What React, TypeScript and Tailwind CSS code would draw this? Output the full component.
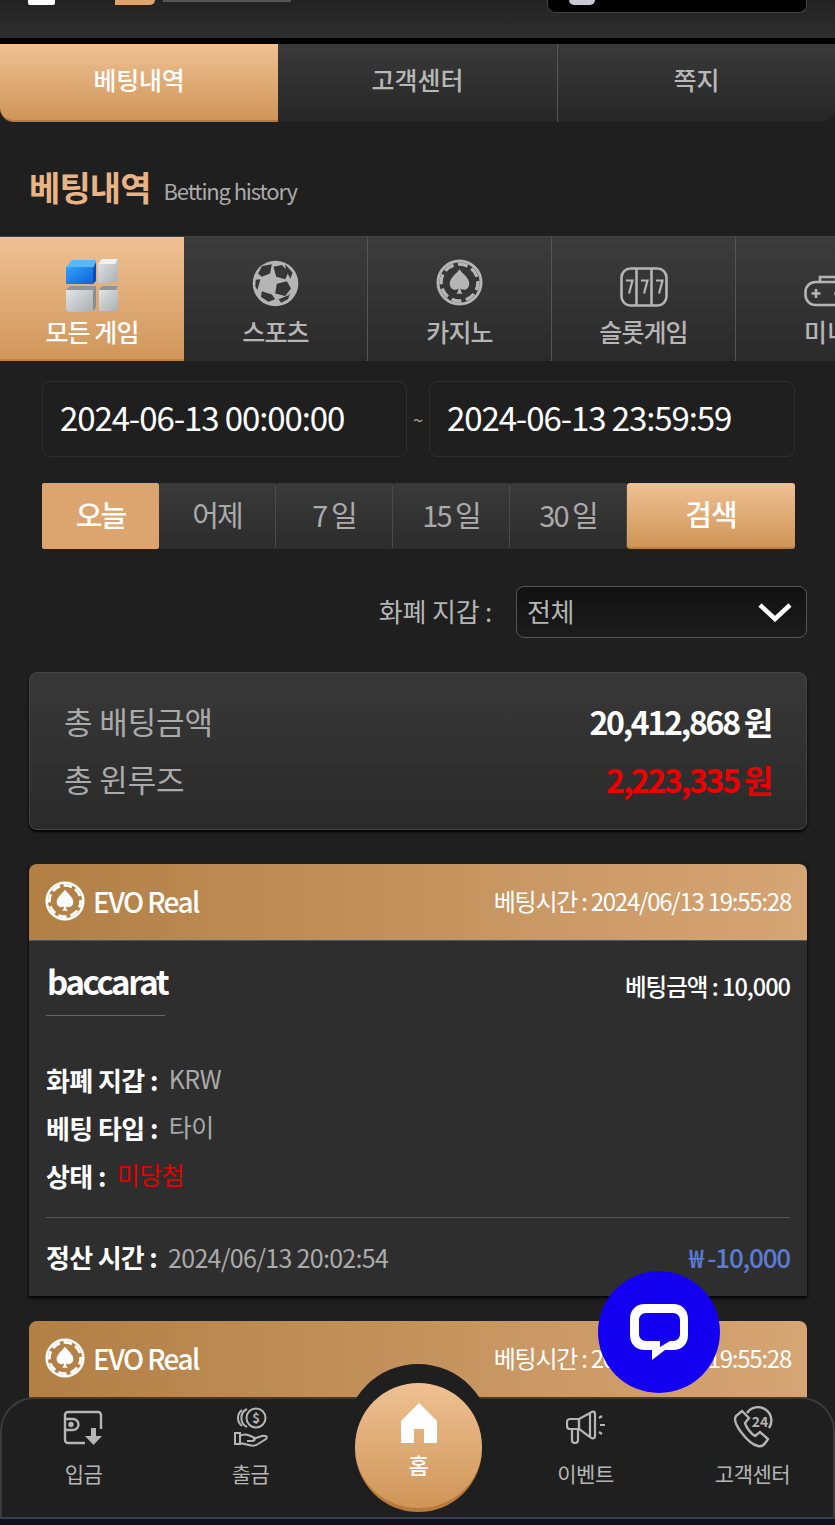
import React from "react";

const spade = "M12 5.2c1.9 2.7 5 4.4 5 7.4 0 1.9-1.4 3.1-2.9 3.1-.7 0-1.2-.2-1.6-.6.1 1.1.5 2 1.1 2.7h-3.2c.6-.7 1-1.6 1.1-2.7-.4.4-.9.6-1.6.6-1.5 0-2.9-1.2-2.9-3.1 0-3 3.1-4.7 5-7.4z";

function Chip({ className }: { className: string }) {
  return (
    <svg viewBox="0 0 24 24" className={className} fill="none" stroke="currentColor">
      <circle cx="12" cy="12" r="11" strokeWidth="1.5" />
      <circle cx="12" cy="12" r="9.4" strokeWidth="1.7" strokeDasharray="5.1 2.28" strokeDashoffset="1.1" />
      <path d={spade} fill="currentColor" stroke="none" />
    </svg>
  );
}

function Ball() {
  return (
    <svg viewBox="36 15 140 140" className="w-[47px] h-[47px]">
      <circle cx="106" cy="85" r="68" fill="#b5b5b5" />
      <g fill="#363636">
        <path d="M100 35l25-5 20 20-10 22-27-7z" />
        <path d="M110 86l30-8 12 22-17 22-30-7z" />
        <path d="M65 108l30 10 10 14-20 7-22-14z" />
        <path d="M66 33l29-5-5 27-25 10-11-10z" />
        <path d="M47 74l14-2-9 33-6-12z" />
        <path d="M135 28l22 25-7 18-13-28z" />
        <path d="M115 132l30-12 6-8-8 20-20 10z" />
      </g>
    </svg>
  );
}

function Cubes() {
  return (
    <svg viewBox="0 0 54 56" className="w-[54px] h-[56px]">
      <defs>
        <linearGradient id="cb" x1="0" y1="0" x2="1" y2="1"><stop offset="0" stopColor="#35a2f5" /><stop offset="1" stopColor="#0c62dc" /></linearGradient>
        <linearGradient id="cg" x1="0" y1="0" x2="1" y2="1"><stop offset="0" stopColor="#e3e5e6" /><stop offset="1" stopColor="#a9aeb2" /></linearGradient>
      </defs>
      <path d="M1 10 7 3h24v2l-3 6z" fill="#5bb8f7" />
      <path d="M1 10h27v17H1z" fill="url(#cb)" />
      <path d="M28 11l3-6v19l-3 3z" fill="#0b4fb5" />
      <path d="M33 7l4-5h16v23l-20 1z" fill="url(#cg)" />
      <path d="M33 7l4-5h16l-3 5z" fill="#f0f1f2" />
      <path d="M1 33l4-4h26l-3 4z" fill="#8f9599" />
      <path d="M1 33h27v20l-2 2H3l-2-2z" fill="url(#cg)" />
      <path d="M28 33l3-4v21l-3 4z" fill="#888e92" />
      <path d="M34 33l3-4h16l-2 4z" fill="#8f9599" />
      <path d="M34 33h19v21H34z" fill="url(#cg)" />
    </svg>
  );
}

function Slot() {
  return (
    <svg viewBox="0 0 48 40" className="w-[48px] h-[40px]" fill="none" stroke="#b5b5b5" strokeWidth="2.6">
      <rect x="1.5" y="1.5" width="45" height="37" rx="9" />
      <path d="M16.5 2v36M31.5 2v36" />
      <path d="M6 13.5h6.500l-3.500 13M21 13.5h6.500l-3.500 13M36 13.5h6.500l-3.500 13" strokeWidth="2.2" />
    </svg>
  );
}

function Pad() {
  return (
    <svg viewBox="0 0 48 32" className="w-[48px] h-[32px] shrink-0" fill="none" stroke="#b5b5b5" strokeWidth="2.6">
      <path d="M16 7V2h16v5" />
      <rect x="1.5" y="7" width="45" height="23" rx="10" />
      <path d="M12 14v9M7.500 18.500h9" />
      <circle cx="33" cy="18.5" r="1.5" fill="#b5b5b5" />
      <circle cx="39" cy="18.5" r="1.5" fill="#b5b5b5" />
    </svg>
  );
}

function Tab({ icon, label, active }: { icon: React.ReactNode; label: string; active?: boolean }) {
  return (
    <div className={"w-[184px] shrink-0 flex flex-col items-center " + (active ? "bg-gradient-to-b from-[#efc193] to-[#d0965a] border-b-2 border-[#c17f3e] text-white" : "bg-gradient-to-b from-[#3c3c3c] to-[#2a2a2a] border-r border-[#555] text-[#b5b5b5]")}>
      <div className={"flex justify-center h-[70px] " + (active ? "items-start pt-[20px]" : "items-end")}>{icon}</div>
      <div className="mt-[7px] text-[25px] leading-[34px] tracking-[-0.9px] font-medium whitespace-nowrap">{label}</div>
    </div>
  );
}

function DayBtn({ label, active }: { label: string; active?: boolean }) {
  return (
    <div className={"w-[117px] h-[66px] pb-[2px] flex items-center justify-center text-[29px] tracking-[-2px] rounded-[2px] " + (active ? "bg-[#dca56f] text-white font-medium" : "bg-gradient-to-b from-[#3a3a3a] to-[#2c2c2c] border-r border-[#4a4a4a] text-[#aaa]")}>
      {label}
    </div>
  );
}

function CardHeader() {
  return (
    <div className="h-[77px] rounded-t-[8px] bg-gradient-to-r from-[#b28045] to-[#d6a574] border-b border-[#555] flex items-center justify-between pl-[16px] pr-[16px] pb-[3px]">
      <div className="flex items-center gap-[8px] text-white">
        <Chip className="w-[40px] h-[40px]" />
        <span className="text-[28px] font-medium tracking-[-1.6px]">EVO Real</span>
      </div>
      <div className="text-[24px] text-white tracking-[-1.25px]">베팅시간 : 2024/06/13 19:55:28</div>
    </div>
  );
}

function Row({ k, v, red }: { k: string; v: string; red?: boolean }) {
  return (
    <div className="h-[48px] flex items-center text-[25px] tracking-[-0.6px]">
      <span className="font-bold text-white text-[26px] mr-[11px]">{k} :</span>
      <span className={red ? "text-[#e30000]" : "text-[#aaa]"}>{v}</span>
    </div>
  );
}

function NavItem({ icon, label }: { icon: React.ReactNode; label: string }) {
  return (
    <div className="w-[167px] flex flex-col items-center text-[#b5b5b5]">
      <div className="h-[46px] flex items-center justify-center">{icon}</div>
      <div className="mt-[8px] text-[21px] leading-[30px] tracking-[-0.5px]">{label}</div>
    </div>
  );
}

export default function App() {
  return (
    <div className="relative w-[835px] h-[1525px] overflow-hidden bg-[#1f1f1f] text-white font-['Noto_Sans_CJK_KR','Noto_Sans',sans-serif]">
      <div className="h-[38px] bg-gradient-to-b from-[#222] to-[#2e2e2e] flex items-start">
        <div className="ml-[28px] w-[27px] h-[5px] bg-white rounded-b-[2px]" />
        <div className="ml-[60px] w-[40px] h-[5px] bg-[#dca56f] rounded-br-[8px]" />
        <div className="ml-[8px] w-[128px] h-[2px] bg-[#555]" />
        <div className="ml-[256px] w-[260px] h-[13px] bg-black border border-[#444] border-t-0 rounded-b-[8px] flex items-start pl-[21px]">
          <div className="w-[26px] h-[5px] bg-[#c8c8d4] rounded-b-full" />
        </div>
      </div>
      <div className="h-[6px] bg-black" />

      <div className="flex h-[78px] text-[25px] font-medium">
        <div className="w-[278px] pb-[5px] tracking-[-0.3px] rounded-bl-[14px] bg-gradient-to-b from-[#efc193] to-[#cf9557] border-b-2 border-[#b87a3a] flex items-center justify-center text-white">베팅내역</div>
        <div className="w-[280px] pb-[6px] bg-gradient-to-b from-[#3a3a3a] to-[#262626] border-r border-[#555] flex items-center justify-center text-[#b8b8b8]">고객센터</div>
        <div className="w-[277px] pb-[6px] rounded-br-[14px] bg-gradient-to-b from-[#3a3a3a] to-[#262626] flex items-center justify-center text-[#b8b8b8]">쪽지</div>
      </div>

      <div className="h-[114px] flex items-center pl-[29px] pt-[15px] gap-[13px]">
        <span className="text-[34px] font-bold text-[#e8b486] tracking-[-0.9px]">베팅내역</span>
        <span className="text-[22px] text-[#aaa] tracking-[-1.15px] mt-[7px]">Betting history</span>
      </div>

      <div className="flex h-[125px] overflow-hidden border-t border-[#444] bg-[#2a2a2a]">
        <Tab active icon={<Cubes />} label="모든 게임" />
        <Tab icon={<Ball />} label="스포츠" />
        <Tab icon={<Chip className="w-[47px] h-[47px] mb-[1px]" />} label="카지노" />
        <Tab icon={<Slot />} label="슬롯게임" />
        <div className="flex-1 min-w-[100px] bg-gradient-to-b from-[#3c3c3c] to-[#2a2a2a] text-[#b5b5b5] pl-[68px]">
          <div className="h-[70px] flex items-end"><Pad /></div>
          <div className="mt-[7px] text-[25px] leading-[34px] font-medium whitespace-nowrap">미니</div>
        </div>
      </div>

      <div className="mt-[20px] ml-[42px] mr-[40px] flex items-center justify-between">
        <div className="w-[365px] h-[76px] pb-[2px] border border-[#2e2e2e] rounded-[8px] pl-[17px] flex items-center text-[33px] tracking-[-1.1px]">2024-06-13 00:00:00</div>
        <span className="text-[18px] text-[#aaa]">~</span>
        <div className="w-[366px] h-[76px] pb-[2px] border border-[#2e2e2e] rounded-[8px] pl-[17px] flex items-center text-[33px] tracking-[-1.1px]">2024-06-13 23:59:59</div>
      </div>

      <div className="mt-[26px] ml-[42px] mr-[40px] flex">
        <DayBtn active label="오늘" />
        <DayBtn label="어제" />
        <DayBtn label="7 일" />
        <DayBtn label="15 일" />
        <DayBtn label="30 일" />
        <div className="w-[168px] h-[66px] pb-[2px] rounded-[3px] bg-gradient-to-b from-[#efc193] to-[#cf9557] border-b-2 border-[#bf7f3d] flex items-center justify-center text-[29px] font-medium tracking-[-1px]">검색</div>
      </div>

      <div className="mt-[37px] mr-[28px] flex items-center justify-end">
        <span className="text-[26px] text-[#b5b5b5] tracking-[-0.2px] mr-[24px] pb-[3px]">화폐 지갑 :</span>
        <div className="w-[291px] h-[52px] rounded-[8px] border border-[#555] bg-gradient-to-b from-[#111] to-[#1c1c1c] flex items-center justify-between pl-[10px] pr-[14px]">
          <span className="text-[26px] text-[#b5b5b5] tracking-[-0.5px] pb-[3px]">전체</span>
          <svg viewBox="0 0 34 20" className="w-[34px] h-[20px]" fill="none" stroke="#fff" strokeWidth="4.5"><path d="M2 3l15 14L32 3" /></svg>
        </div>
      </div>

      <div className="mt-[34px] ml-[29px] mr-[28px] h-[158px] rounded-[8px] bg-gradient-to-b from-[#383838] to-[#2a2a2a] border border-[#444] pl-[34px] pr-[35px] pt-[19px] text-[32px] flex flex-col shadow-[0_2px_3px_#000]">
        <div className="flex justify-between items-center h-[58px]">
          <span className="text-[#aaa] tracking-[-0.1px] text-[31px]">총 배팅금액</span>
          <span className="font-bold tracking-[-2.25px]">20,412,868 원</span>
        </div>
        <div className="flex justify-between items-center h-[58px]">
          <span className="text-[#aaa] tracking-[-0.1px] text-[31px]">총 윈루즈</span>
          <span className="font-bold tracking-[-2.25px] text-[#ee0000]">2,223,335 원</span>
        </div>
      </div>

      <div className="mt-[34px] ml-[29px] mr-[28px] shadow-[0_2px_3px_#000]">
        <CardHeader />
        <div className="h-[355px] bg-[#2e2e2e] px-[17px] flex flex-col">
          <div className="flex justify-between items-start pt-[18px]">
            <div className="w-[119px] h-[57px] border-b border-[#666] text-[33px] font-bold tracking-[-2.4px] pl-[1px] leading-[44px] whitespace-nowrap">baccarat</div>
            <div className="text-[23.5px] font-medium tracking-[-1px] mt-[10px]">베팅금액 : 10,000</div>
          </div>
          <div className="mt-[39px]">
            <Row k="화폐 지갑" v="KRW" />
            <Row k="베팅 타입" v="타이" />
            <Row k="상태" v="미당첨" red />
          </div>
          <div className="mt-[18px] border-t border-[#555] flex justify-between items-center h-[78px] text-[25px]">
            <div className="tracking-[-0.7px]"><span className="font-bold text-[26px] mr-[11px]">정산 시간 :</span><span className="text-[#aaa]">2024/06/13 20:02:54</span></div>
            <span className="text-[#5b7bd5] font-medium text-[26px] tracking-[-1.2px]">₩ -10,000</span>
          </div>
        </div>
      </div>

      <div className="mt-[25px] ml-[29px] mr-[28px]">
        <CardHeader />
      </div>

      <div className="absolute left-[598px] top-[1271px] w-[122px] h-[122px] rounded-full bg-[#1400f0] flex items-center justify-center">
        <svg viewBox="0 0 58 56" className="w-[58px] h-[56px]" fill="#fff" fillRule="evenodd">
          <path d="M15 0h28c9 0 15 6 15 15v16c0 9-6 15-15 15H35L22 56v-10h-7C6 46 0 40 0 31V15C0 6 6 0 15 0zm1 9c-4 0-7 3-7 7v14c0 4 3 7 7 7h14v6l10-6h3c4 0 7-3 7-7V16c0-4-3-7-7-7z" />
        </svg>
      </div>

      <div className="absolute left-0 right-0 bottom-0 h-[128px]">
        <div className="absolute left-0 right-0 top-0 h-[120px] rounded-t-[34px] bg-[#1f1f1f] border-t-2 border-x-2 border-[#3b3b3b] flex items-start justify-between pt-[5px]">
          <div className="flex -ml-[2px]">
            <NavItem label="입금" icon={
              <svg viewBox="0 0 42 38" className="w-[42px] h-[38px] mt-[2px]" fill="none" stroke="#b5b5b5" strokeWidth="2.4"><path d="M38 20V6a3 3 0 0 0-3-3H5a3 3 0 0 0-3 3v25a3 3 0 0 0 3 3h17" /><path d="M2 10h8a5 5 0 0 1 0 11H2" /><circle cx="8" cy="15.5" r="1.5" fill="#b5b5b5" /><path d="M28 19h5v8h6l-8.500 9-8.500-9h6z" fill="#b5b5b5" stroke="none" /></svg>
            } />
            <NavItem label="출금" icon={
              <svg viewBox="0 0 36 42" className="w-[36px] h-[42px]" fill="none" stroke="#b5b5b5" strokeWidth="2"><circle cx="23" cy="12" r="9.500" /><path d="M14 3a10 10 0 0 0 0 18M9 4a10 10 0 0 0 0 16" /><text x="23" y="17" fontSize="13" fill="#b5b5b5" stroke="none" textAnchor="middle" fontWeight="700">$</text><path d="M2 27h5v11H2zM7 30c3-2 5-2 8-1l5 2c3 1 2 4-1 4h-5M20 33l9-3c4-1 6 1 4 3l-8 5c-3 2-6 2-9 1l-9-2" /></svg>
            } />
          </div>
          <div className="flex -mr-[3px]">
            <NavItem label="이벤트" icon={
              <svg viewBox="0 0 40 34" className="w-[40px] h-[34px]" fill="none" stroke="#b5b5b5" strokeWidth="2.2"><path d="M13 9H4a3 3 0 0 0-3 3v4a3 3 0 0 0 3 3h9z" /><path d="M13 9 24 3c2-2 5-2 5 1v22c0 3-3 3-5 1l-11-8z" /><path d="M6 19v11a2 2 0 0 0 6 0V19" /><path d="M24 3v24" /><path d="M33 8l3-2M34 15h5M33 22l3 2" /></svg>
            } />
            <NavItem label="고객센터" icon={
              <svg viewBox="0 0 40 42" className="w-[40px] h-[42px]" fill="none" stroke="#b5b5b5" strokeWidth="2.4"><path d="M9 5 3 10c-2 3-1 8 5 16s12 13 17 14c3 1 6-1 8-4l2-3-8-7-5 4c-4-2-9-9-10-13l4-5z" /><path d="M14 7a13 13 0 1 1 22 15" /><text x="27" y="21" fontSize="14" fill="#b5b5b5" stroke="none" textAnchor="middle" fontWeight="700">24</text></svg>
            } />
          </div>
        </div>
        <div className="absolute left-1/2 -translate-x-1/2 -top-[33px] w-[146px] h-[146px] rounded-full bg-[#1f1f1f]" />
        <div className="absolute left-[355px] -top-[14px] w-[127px] h-[129px] rounded-full bg-gradient-to-b from-[#efc193] to-[#cf9557] border-b-4 border-[#b87a3a] flex flex-col items-center pt-[20px] text-white">
          <svg viewBox="0 0 36 40" className="w-[36px] h-[40px]" fill="#fff"><path d="M18 0 36 18v22H23V26H13v14H0V18z" /></svg>
          <div className="text-[22px] leading-[28px] mt-[7px] font-medium">홈</div>
        </div>
        <div className="absolute left-0 right-0 bottom-0 h-[8px] bg-[#0e1220] border-t-2 border-[#3a3d50]" />
      </div>
    </div>
  );
}
